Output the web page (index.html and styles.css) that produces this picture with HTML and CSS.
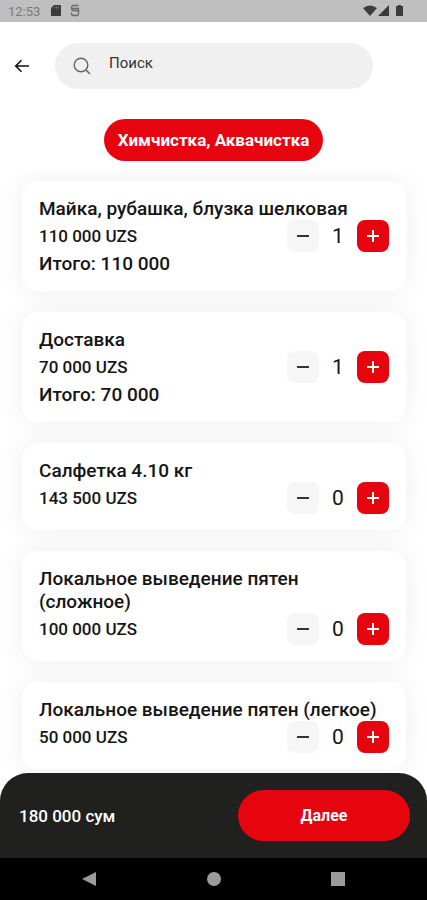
FILE: index.html
```html
<!DOCTYPE html>
<html lang="ru">
<head>
<meta charset="utf-8">
<meta name="viewport" content="width=device-width, initial-scale=1">
<title>Химчистка, Аквачистка</title>
<link rel="stylesheet" href="styles.css">
</head>
<body>
<div class="status">
  <span class="clock">12:53</span>
  <svg class="status-left" width="32" height="14" viewBox="0 0 32 14" aria-hidden="true">
    <path d="M4 1h7v11H1V4z" fill="#3c3c3c"/>
    <path d="M4.500 2.500v2M6.500 2.500v2M8.500 2.500v2" stroke="#777"/>
    <path d="M28.500 1.500h-5a2 2 0 0 0-2 2v1a2 2 0 0 0 2 2h3a2 2 0 0 1 2 2v1a2 2 0 0 1-2 2h-3a2 2 0 0 1-2-2v-1M21.500 4.500h7v4" fill="none" stroke="#6a6a6a" stroke-width="1.300"/>
  </svg>
  <svg class="status-right" width="42" height="14" viewBox="0 0 42 14" aria-hidden="true">
    <g fill="#3c3c3c"><path d="M0 4Q7-1 14 4L7 12z"/><path d="M26 1v11H15z"/><path d="M33 2h2V1h3v1h2v10h-7z"/></g>
  </svg>
</div>

<header class="top">
  <button class="back" aria-label="Назад">
    <svg width="16" height="14" viewBox="0 0 16 14" aria-hidden="true"><path d="M15 7H2M7.500 1.200L1.700 7l5.800 5.800" fill="none" stroke="#111" stroke-width="1.600"/></svg>
  </button>
  <label class="search">
    <svg width="18" height="18" viewBox="0 0 18 18" aria-hidden="true"><circle cx="8" cy="8" r="6.800" fill="none" stroke="#666" stroke-width="1.400"/><path d="M13 13l4 4" stroke="#666" stroke-width="1.600"/></svg>
    <input type="search" placeholder="Поиск" aria-label="Поиск">
  </label>
</header>

<nav class="tabs"><button class="tab">Химчистка, Аквачистка</button></nav>

<main class="list">
  <article class="card">
    <h2>Майка, рубашка, блузка шелковая</h2>
    <div class="row"><span class="price">110 000 UZS</span>
      <div class="stepper"><button class="minus" aria-label="Уменьшить"></button><output>1</output><button class="plus" aria-label="Увеличить"></button></div></div>
    <p class="total">Итого: 110 000</p>
  </article>
  <article class="card">
    <h2>Доставка</h2>
    <div class="row"><span class="price">70 000 UZS</span>
      <div class="stepper"><button class="minus" aria-label="Уменьшить"></button><output>1</output><button class="plus" aria-label="Увеличить"></button></div></div>
    <p class="total">Итого: 70 000</p>
  </article>
  <article class="card">
    <h2>Салфетка 4.10 кг</h2>
    <div class="row"><span class="price">143 500 UZS</span>
      <div class="stepper"><button class="minus" aria-label="Уменьшить"></button><output>0</output><button class="plus" aria-label="Увеличить"></button></div></div>
  </article>
  <article class="card">
    <h2>Локальное выведение пятен<br>(сложное)</h2>
    <div class="row"><span class="price">100 000 UZS</span>
      <div class="stepper"><button class="minus" aria-label="Уменьшить"></button><output>0</output><button class="plus" aria-label="Увеличить"></button></div></div>
  </article>
  <article class="card">
    <h2>Локальное выведение пятен (легкое)</h2>
    <div class="row"><span class="price">50 000 UZS</span>
      <div class="stepper"><button class="minus" aria-label="Уменьшить"></button><output>0</output><button class="plus" aria-label="Увеличить"></button></div></div>
  </article>
</main>

<footer class="summary">
  <strong>180 000 сум</strong>
  <button class="next">Далее</button>
</footer>
<nav class="system">
  <button aria-label="Назад"><svg width="16" height="16" viewBox="0 0 16 16"><path d="M15 1v14L1 8z" fill="#9b9b9b"/></svg></button>
  <button aria-label="Домой"><svg width="16" height="16" viewBox="0 0 16 16"><circle cx="8" cy="8" r="7" fill="#9b9b9b"/></svg></button>
  <button aria-label="Недавние"><svg width="16" height="16" viewBox="0 0 16 16"><path d="M1 1h14v14H1z" fill="#9b9b9b"/></svg></button>
</nav>
</body>
</html>
```
FILE: styles.css
```css
* { box-sizing: border-box; }

body {
  margin: 0;
  height: 100vh;
  display: flex;
  flex-direction: column;
  background: #fff;
  color: #151515;
  font-family: Roboto, "Liberation Sans", sans-serif;
  overflow: hidden;
}

button {
  border: 0;
  padding: 0;
  background: none;
  font-family: inherit;
  cursor: pointer;
}

svg { display: block; }

.status {
  flex: none;
  display: flex;
  align-items: center;
  height: 22px;
  padding: 0 22px 0 8px;
  background: #bfbfbf;
}

.clock {
  color: #7a7a7a;
  font-size: 13px;
}

.status-left { margin-left: 10px; }
.status-right { margin-left: auto; }

.top {
  flex: none;
  display: flex;
  align-items: center;
  padding: 21px 54px 0 14px;
}

.back {
  display: flex;
  width: 41px;
}

.search {
  flex: 1;
  display: flex;
  align-items: center;
  gap: 18px;
  height: 46px;
  padding: 0 18px;
  border-radius: 23px;
  background: #f0f0f0;
}

.search input {
  flex: 1;
  min-width: 0;
  border: 0;
  padding: 0 0 6px;
  outline: 0;
  background: none;
  font: 15px/20px Roboto, sans-serif;
}

.search input::placeholder { color: #333; }

.tabs {
  flex: none;
  display: flex;
  justify-content: center;
  padding: 30px 0 9px;
}

.tab {
  height: 42px;
  padding: 0 14px;
  border-radius: 21px;
  background: #e6040f;
  color: #fff;
  font-size: 17px;
  font-weight: 700;
}

.list {
  flex: 1;
  min-height: 0;
  display: flex;
  flex-direction: column;
  gap: 21px;
  margin-bottom: -30px;
  padding: 11px 21px 0 22px;
  overflow: hidden;
}

.card {
  position: relative;
  flex: none;
  padding: 16px 17px;
  border-radius: 16px;
  background: #fff;
}

.card::before {
  content: "";
  position: absolute;
  z-index: -1;
  inset: 0;
  border-radius: 16px;
  box-shadow: 0 0 26px 2px rgba(0, 0, 0, 0.06);
}

.card h2,
.total {
  margin: 0;
  font-size: 19px;
  font-weight: 500;
  line-height: 23px;
}

.card h2 { white-space: nowrap; }

.row {
  display: flex;
  align-items: center;
  justify-content: space-between;
}

.price {
  font-size: 17px;
  font-weight: 500;
}

.stepper {
  display: flex;
  align-items: center;
}

.stepper output {
  width: 38px;
  font-size: 21px;
  line-height: 32px;
  text-align: center;
}

.minus,
.plus {
  display: grid;
  place-items: center;
  width: 32px;
  height: 32px;
  border-radius: 8px;
  background: #f6f6f6;
  color: #333;
}

.plus {
  background: #e6040f;
  color: #fff;
}

.minus::before,
.plus::before,
.plus::after {
  content: "";
  grid-area: 1 / 1;
  width: 12px;
  height: 2px;
  background: currentColor;
}

.plus::after {
  width: 2px;
  height: 12px;
}

.summary {
  position: relative;
  flex: none;
  display: flex;
  align-items: center;
  justify-content: space-between;
  height: 85px;
  padding: 0 17px 0 19px;
  border-radius: 28px 28px 0 0;
  background: #20201e;
  color: #fff;
}

.summary strong {
  font-size: 17px;
  font-weight: 500;
}

.next {
  width: 44%;
  height: 51px;
  border-radius: 26px;
  background: #e6040f;
  color: #fff;
  font-size: 16px;
  font-weight: 700;
}

.system {
  flex: none;
  display: flex;
  align-items: center;
  justify-content: space-between;
  height: 42px;
  padding: 0 81px;
  background: #000;
}
```
